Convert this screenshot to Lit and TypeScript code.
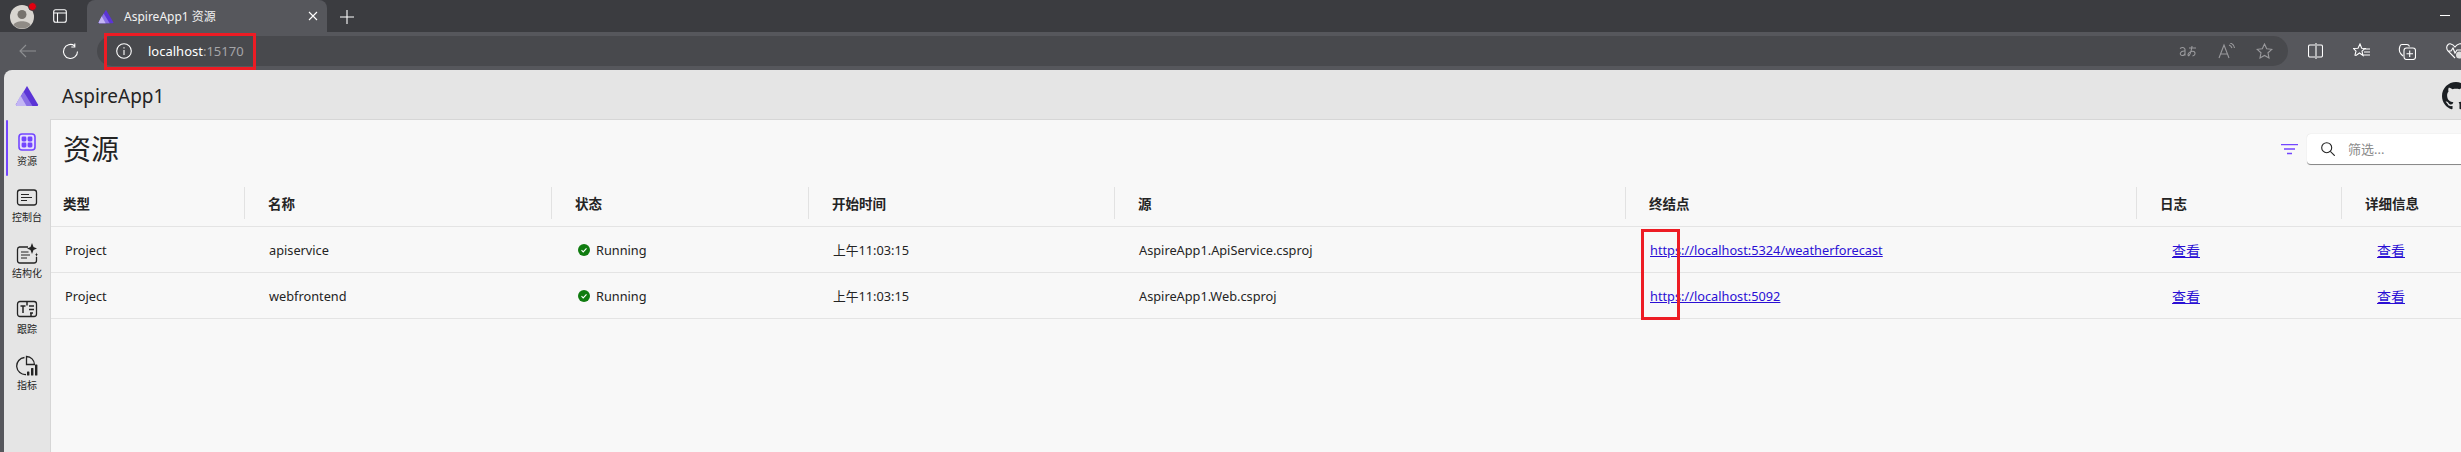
import { LitElement, html, css, svg } from "lit";
import { customElement } from "lit/decorators.js";

const logo = (w: number, h: number) => html`<svg width=${w} height=${h} viewBox="0 0 24 22">
  <path d="M12 1 L23 19.5 Q23.5 21 22 21 L2 21 Q.5 21 1 19.5Z" fill="#5b34d6"/>
  <path d="M8.500 6.500 L17.500 21 L2 21 Q.5 21 1 19.5 L5 12.500Z" fill="#8a70e6"/>
  <path d="M5.500 10.500 L11.500 21 L2 21 Q.5 21 1 19.5Z" fill="#c3b6f4"/>
</svg>`;

const navIcons = [
  svg`<rect x="1" y="1" width="16" height="16" rx="3" fill="#e6defc" stroke="#7346ff" stroke-width="1.6"/>
      <g fill="#7346ff"><rect x="3.6" y="3.6" width="4.8" height="4.8" rx="1.4"/><rect x="9.6" y="3.6" width="4.8" height="4.8" rx="1.4"/><rect x="3.6" y="9.6" width="4.8" height="4.8" rx="1.4"/><rect x="9.6" y="9.6" width="4.8" height="4.8" rx="1.4"/></g>`,
  svg`<rect x="1.500" y="3" width="19" height="15" rx="2.500" fill="none" stroke="#242424" stroke-width="1.3"/>
      <path d="M5 7.500h8M5 10.500h11M5 13.500h6" stroke="#242424" stroke-width="1.200" fill="none"/>`,
  svg`<path d="M12 4H3.500A2.500 2.500 0 0 0 1.500 6.500V17.500A2.500 2.500 0 0 0 4 20H18A2.500 2.500 0 0 0 20.500 17.500V14" fill="none" stroke="#242424" stroke-width="1.300"/>
      <path d="M5 9h7.500M5 12h9M5 15h6" stroke="#242424" stroke-width="1.200" fill="none"/>
      <path d="M16 0 L17.500 4 L21 5.500 L17.500 7 L16 11 L14.500 7 L11 5.500 L14.500 4Z" fill="#242424"/>
      <path d="M20.500 9.500 L21 11.300 L22 11.800 L21 12.300 L20.500 14 L20 12.300 L19 11.800 L20 11.300Z" fill="#242424"/>`,
  svg`<rect x="1.500" y="2.500" width="19" height="15" rx="2.500" fill="none" stroke="#242424" stroke-width="1.300"/>
      <path d="M4.500 7h5M7 7v7M13 7h5M13 10.500h5M14 14h3M11 2.500v4M15 14v3.500" stroke="#242424" stroke-width="1.500" fill="none"/>`,
  svg`<path d="M8.500 2.500A8.500 8.500 0 1 0 10 19.500" fill="none" stroke="#242424" stroke-width="1.300"/>
      <path d="M10.500 1.500A8 8 0 0 1 18.400 9.500H10.500Z" fill="none" stroke="#242424" stroke-width="1.300"/>
      <rect x="11" y="16.500" width="2.400" height="4" rx=".6" fill="#242424"/><rect x="15" y="13" width="2.400" height="7.500" rx=".6" fill="#242424"/><rect x="19" y="9.500" width="2.400" height="11" rx=".6" fill="#242424"/>`,
];

const ws = "fill:none;stroke:#fff;stroke-width:1.1";
const gs = "fill:none;stroke:#9a9a9d;stroke-width:1.1";

@customElement("status-dot")
class StatusDot extends LitElement {
  static styles = css`:host{display:inline-flex}`;
  render() {
    return html`<svg width="12" height="12" viewBox="0 0 12 12"><circle cx="6" cy="6" r="6" fill="#107c10"/><path d="M3.500 6.200l1.700 1.700 3.300-3.500" fill="none" stroke="#fff" stroke-width="1.100"/></svg>`;
  }
}

@customElement("app-root")
class AppRoot extends LitElement {
  static styles = css`
    :host{display:flex;flex-direction:column;height:100vh;width:100%;overflow:hidden;position:relative;background:#56575c;
      font-family:"Noto Sans","Noto Sans CJK SC",sans-serif;font-size:12.75px;color:#242424}
    svg{display:block;flex:none}
    .tabstrip{height:32px;background:#3b3c40;display:flex;align-items:flex-end;flex:none}
    .profile{margin:0 0 3px 10px;width:24px;height:24px;position:relative;}
    .reddot{position:absolute;top:-3px;right:-3px;width:7px;height:7px;border-radius:50%;background:#e3000f;border:1px solid #3b3c40}
    .tabsbtn{margin:0 0 9px 19px}
    .tab{margin-left:20px;width:240px;height:32px;background:#56575c;border-radius:8px 8px 0 0;display:flex;align-items:center;color:#f2f2f2;font-size:12px;padding:0 9px 0 11px;box-sizing:border-box}
    .tab span{margin-left:10px;flex:1}
    .plus{margin:0 0 8px 13px}
    .minimize{margin:0 0 16px auto;width:10px;height:1px;background:#fff;margin-right:11px}
    .toolbar{height:38px;display:flex;align-items:center;flex:none;padding-left:19px}
    .reload{margin-left:25px}
    .address{margin-left:18px;flex:none;width:2191px;height:30px;border-radius:15px;background:#48494d;display:flex;align-items:center;padding-left:19px;box-sizing:border-box;color:#fff;font-size:13px}
    .address .host{margin-left:16px}.address .port{color:#a5a5a8}
    .addr-right{margin-left:auto;display:flex;align-items:center;gap:21px;padding-right:15px}
    .tools{display:flex;align-items:center;flex:none;gap:23px;margin-left:20px}
    .app{flex:1;margin-left:4px;border-radius:8px 0 0 0;background:#e5e5e5;display:flex;flex-direction:column;min-height:0}
    .apphead{height:49px;display:flex;align-items:center;padding-left:11px;flex:none;padding-top:2px;box-sizing:border-box}
    .apphead .name{margin-left:23px;font-size:19px;font-family:"Noto Sans",sans-serif}
    .gh{margin-left:auto;margin-right:-9px}
    .appbody{flex:1;display:flex;min-height:0}
    .rail{width:46px;flex:none;display:flex;flex-direction:column;padding-top:1px}
    .navitem{height:56px;display:flex;flex-direction:column;align-items:center;justify-content:flex-start;padding-top:10px;box-sizing:border-box;font-size:10px;line-height:13px;position:relative;gap:1px}
    .navitem .ic{height:24px;display:flex;align-items:center;justify-content:center}
    .navitem.active::before{content:"";position:absolute;left:2px;top:0;bottom:0;width:2px;background:#7346ff;border-radius:1px}
    .main{flex:1;min-width:0;background:#f8f8f8;border:1px solid #d6d6d6;border-width:1px 0 0 1px;overflow:hidden}
    .titlebar{height:56px;display:flex;align-items:center;padding-left:12px}
    h1{margin:0;font-size:28px;font-weight:400;font-family:"Noto Sans CJK SC",sans-serif;line-height:56px}
    .filter{margin-left:auto;margin-right:9px;margin-top:2px}
    .search{width:200px;flex:none;height:31px;margin-top:2px;margin-right:-46px;background:#fff;border-radius:4px 0 0 4px;border-bottom:1px solid #8a8a8a;box-shadow:0 0 1px #ccc;display:flex;align-items:center;padding-left:14px;box-sizing:border-box;color:#8a8a8a;gap:13px;font-size:13px}
    .row{display:grid;grid-template-columns:193px 307px 257px 306px 511px 511px 205px 120px;border-bottom:1px solid #e4e4e4;box-sizing:border-box;width:2410px}
    .row.head{height:51px;padding-top:11px;font-weight:700;font-size:13.5px;align-items:start}
    .row.head>div{height:32px;display:flex;align-items:center;padding-left:23px;border-left:1px solid #e2e2e2;box-sizing:border-box}
    .row.head>div:first-child{padding-left:12px;border-left:0}
    .row.body{height:46px;align-items:center}
    .row.body>div{padding-left:25px;display:flex;align-items:center;white-space:nowrap;box-sizing:border-box}
    .row.body>div:first-child{padding-left:14px}
    .row.body>div.status{gap:6px;padding-left:27px}
    a{color:#2a0fd4;text-decoration:underline}
    .row.body>div.act{padding-left:36px;font-size:14px}
    .redbox{position:absolute;border:3px solid #ed1c24;box-sizing:border-box;pointer-events:none}
    .rb1{left:104px;top:33px;width:152px;height:37px}
    .rb2{left:1641px;top:229px;width:39px;height:91px}
  `;

  render() {
    const nav = ["资源", "控制台", "结构化", "跟踪", "指标"];
    const rows = [
      ["apiservice", "AspireApp1.ApiService.csproj", "https://localhost:5324/weatherforecast"],
      ["webfrontend", "AspireApp1.Web.csproj", "https://localhost:5092"],
    ];
    return html`
      <div class="tabstrip">
        <div class="profile">
          <svg width="24" height="24" viewBox="0 0 24 24"><circle cx="12" cy="12" r="12" fill="#d8d5d0"/><circle cx="12" cy="9.500" r="4.500" fill="#77736e"/><path d="M3.500 20c2-5 15-5 17 0a12 12 0 0 1-17 0z" fill="#8f8b86"/></svg>
          <div class="reddot"></div>
        </div>
        <div class="tabsbtn"><svg width="14" height="14" viewBox="0 0 14 14"><rect x=".7" y=".7" width="12.600" height="12.600" rx="2" style=${ws}/><path d="M.7 4h12.600M4.500 4v9.300" style=${ws}/></svg></div>
        <div class="tab">${logo(16, 15)}<span>AspireApp1 资源</span>
          <svg width="10" height="10" viewBox="0 0 10 10"><path d="M1 1l8 8M9 1l-8 8" style=${ws}/></svg></div>
        <div class="plus"><svg width="14" height="14" viewBox="0 0 14 14"><path d="M7 0v14M0 7h14" style=${ws}/></svg></div>
        <div class="minimize"></div>
      </div>
      <div class="toolbar">
        <svg width="18" height="14" viewBox="0 0 18 14"><path d="M17 7H1M7 1L1 7l6 6" style="fill:none;stroke:#8e8f92;stroke-width:1.100"/></svg>
        <div class="reload"><svg width="17" height="17" viewBox="0 0 17 17"><path d="M15.500 8.500A7 7 0 1 1 12.500 2.700M12.800 .5v3.500H9.300" style=${ws}/></svg></div>
        <div class="address">
          <svg width="16" height="16" viewBox="0 0 16 16"><circle cx="8" cy="8" r="7.300" style=${ws}/><path d="M8 7v5M8 4.200v1.300" style=${ws}/></svg>
          <span class="host">localhost<span class="port">:15170</span></span>
          <div class="addr-right">
            <svg width="18" height="12" viewBox="0 0 18 12"><path d="M1 3.500c3-2 5-.5 5 1v6M6 6c-5-.5-6 4-3 4.500 1.500.2 3-.8 3-2.500M10 3h7M13 1c-.5 4-1.500 8-3 9.500-.5.5-1 0-1-1 0-2 4-4 6-3 2 1.500 1 4-1.500 4.500" style=${gs}/></svg>
            <svg width="17" height="16" viewBox="0 0 17 16"><path d="M1 15L6 2l5 13M2.500 11h7M11 2c1.500.5 2.500 1.500 3 3M12 0c2.500.5 4 2.500 4.500 5" style=${gs}/></svg>
            <svg width="17" height="16" viewBox="0 0 17 16"><path d="M8.500 1l2.200 4.700 5.100.6-3.800 3.500 1 5.100-4.500-2.500-4.500 2.500 1-5.100L1.200 6.300l5.100-.6z" style=${gs}/></svg>
          </div>
        </div>
        <div class="tools">
          <svg width="15" height="16" viewBox="0 0 15 16"><path d="M7 2H2a1.500 1.500 0 0 0-1.500 1.500v9A1.500 1.500 0 0 0 2 14h5M9 2h4a1.500 1.500 0 0 1 1.500 1.500v9A1.500 1.500 0 0 1 13 14H9M8 0v16" style=${ws}/></svg>
          <div style="margin-left:7px"><svg width="17" height="16" viewBox="0 0 17 16"><path d="M7 1l1.700 4.200 3.300.3-3 2.700 1 4.300L6.500 10l-3.500 2.500-1-.3 1-4L.500 5.500l4.500-.3zM12 6h5M11 9h6M10.500 12h6.500" style=${ws}/></svg></div>
          <div style="margin-left:5px"><svg width="18" height="17" viewBox="0 0 18 17"><path d="M5 13L3 11C1 9 1 6 2 3c.3-1 1-1.500 2-1.500h5c1 0 2 .5 2.500 2" style=${ws}/><rect x="6" y="5" width="11.500" height="11.500" rx="2.500" style=${ws}/><path d="M11.700 7.500v6.500M8.500 10.700h6.500" style=${ws}/></svg></div>
          <div style="margin-left:7px;position:relative"><svg width="18" height="16" viewBox="0 0 18 16"><path d="M9 15L2 8C-1 4 2 0 5 1c2 .5 3 1.500 4 3 1-1.500 2-2.500 4-3 3-1 6 3 3 7M2 8h3l2-3 2 5 2-3h6" style=${ws}/><circle cx="13.500" cy="12" r="3.500" fill="#ddd"/></svg></div>
        </div>
      </div>
      <div class="app">
        <div class="apphead">
          ${logo(24, 22)}
          <div class="name">AspireApp1</div>
          <div class="gh"><svg width="28" height="28" viewBox="0 0 16 16"><path fill="#1b1f23" d="M8 0C3.580 0 0 3.580 0 8c0 3.540 2.290 6.530 5.470 7.590.4.070.55-.17.550-.38 0-.19-.01-.82-.01-1.490-2.010.37-2.530-.49-2.690-.94-.09-.23-.48-.94-.82-1.130-.28-.15-.68-.52-.01-.53.630-.01 1.080.58 1.230.82.720 1.210 1.870.87 2.330.66.070-.52.280-.87.510-1.070-1.780-.2-3.640-.89-3.640-3.950 0-.87.310-1.590.82-2.150-.08-.2-.36-1.020.08-2.120 0 0 .67-.21 2.200.82.640-.18 1.320-.27 2-.27s1.360.09 2 .27c1.530-1.040 2.200-.82 2.200-.82.440 1.100.160 1.920.08 2.120.510.560.820 1.270.820 2.150 0 3.070-1.870 3.750-3.650 3.950.290.250.540.730.540 1.480 0 1.070-.01 1.930-.01 2.200 0 .210.150.460.550.380A8.010 8.010 0 0 0 16 8c0-4.420-3.580-8-8-8z"/></svg></div>
        </div>
        <div class="appbody">
          <div class="rail">
            ${nav.map((n, i) => html`<div class="navitem ${i === 0 ? "active" : ""}">
              <div class="ic"><svg width=${i === 0 ? 18 : 22} height=${i === 0 ? 18 : 22} viewBox=${i === 0 ? "0 0 18 18" : "0 0 22 22"}>${navIcons[i]}</svg></div>
              <div>${n}</div></div>`)}
          </div>
          <div class="main">
            <div class="titlebar">
              <h1>资源</h1>
              <div class="filter"><svg width="17" height="11" viewBox="0 0 17 11"><path d="M0 .7h17M3 5h11M6 9.500h5" stroke="#7346ff" stroke-width="1.300" fill="none"/></svg></div>
              <div class="search">
                <svg width="14" height="14" viewBox="0 0 14 14"><circle cx="5.700" cy="5.700" r="5" fill="none" stroke="#242424" stroke-width="1.100"/><path d="M9.300 9.300l4.500 4.500" stroke="#242424" stroke-width="1.100"/></svg>
                <span>筛选...</span>
              </div>
            </div>
            <div class="row head">
              ${["类型", "名称", "状态", "开始时间", "源", "终结点", "日志", "详细信息"].map((h) => html`<div>${h}</div>`)}
            </div>
            ${rows.map((r) => html`<div class="row body">
              <div>Project</div>
              <div>${r[0]}</div>
              <div class="status"><status-dot></status-dot>Running</div>
              <div>上午11:03:15</div>
              <div>${r[1]}</div>
              <div><a href="#">${r[2]}</a></div>
              <div class="act"><a href="#">查看</a></div>
              <div class="act"><a href="#">查看</a></div>
            </div>`)}
          </div>
        </div>
      </div>
      <div class="redbox rb1"></div>
      <div class="redbox rb2"></div>
    `;
  }
}
